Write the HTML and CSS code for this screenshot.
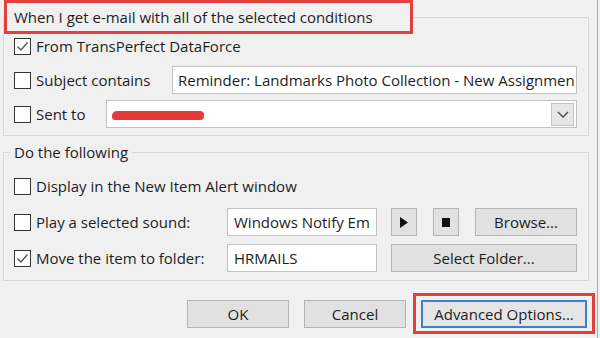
FILE: index.html
```html
<!DOCTYPE html>
<html lang="en">
<head>
    <meta charset="UTF-8">
    <title>Create Rule</title>
    <link rel="stylesheet" href="styles.css">
</head>
<body>
    <div class="window">
        <fieldset class="group group-conditions">
            <legend class="group-title marked">When I get e-mail with all of the selected conditions</legend>
            <div class="row">
                <label class="check-label">
                    <span class="checkbox"><svg viewBox="0 0 15 15" width="15" height="15"><polyline points="2.5,7.5 6,11 12.5,3.5" fill="none" stroke="#555" stroke-width="1.4"/></svg></span>
                    From TransPerfect DataForce
                </label>
            </div>
            <div class="row">
                <label class="check-label label-subject"><span class="checkbox"></span>Subject contains</label>
                <div class="field grow">Reminder: Landmarks Photo Collection - New Assignmen</div>
            </div>
            <div class="row">
                <label class="check-label label-sent"><span class="checkbox"></span>Sent to</label>
                <div class="field combo grow">
                    <span class="redacted"></span>
                    <span class="drop-btn"><svg viewBox="0 0 12 7" width="12" height="7"><polyline points="1,1 6,6 11,1" fill="none" stroke="#555" stroke-width="1.5"/></svg></span>
                </div>
            </div>
        </fieldset>

        <fieldset class="group group-actions">
            <legend class="group-title">Do the following</legend>
            <div class="row">
                <label class="check-label"><span class="checkbox"></span>Display in the New Item Alert window</label>
            </div>
            <div class="row">
                <label class="check-label label-action"><span class="checkbox"></span>Play a selected sound:</label>
                <div class="field field-short">Windows Notify Em</div>
                <div class="btn-group">
                    <button class="btn btn-icon"><svg viewBox="0 0 8 11" width="8" height="11"><polygon points="0,0 8,5.5 0,11" fill="#111"/></svg></button>
                    <button class="btn btn-icon"><span class="stop"></span></button>
                    <button class="btn btn-browse">Browse...</button>
                </div>
            </div>
            <div class="row">
                <label class="check-label label-action">
                    <span class="checkbox"><svg viewBox="0 0 15 15" width="15" height="15"><polyline points="2.5,7.5 6,11 12.5,3.5" fill="none" stroke="#555" stroke-width="1.4"/></svg></span>
                    Move the item to folder:
                </label>
                <div class="field field-short">HRMAILS</div>
                <div class="btn-group">
                    <button class="btn btn-wide">Select Folder...</button>
                </div>
            </div>
        </fieldset>

        <div class="footer">
            <button class="btn btn-dialog">OK</button>
            <button class="btn btn-dialog btn-cancel">Cancel</button>
            <span class="marked-btn"><button class="btn btn-advanced">Advanced Options...</button></span>
        </div>
    </div>
</body>
</html>
```

FILE: styles.css
```css
body {
    margin: 0;
    padding: 0;
    background-color: #f0f0f0;
    font-family: "Open Sans", "Noto Sans", Arial, sans-serif;
    font-size: 15px;
    color: #1e1e1e;
}
.window {
    width: 597px;
    height: 338px;
    border-right: 1px solid #a8a8a8;
    overflow: hidden;
}
.group {
    box-sizing: border-box;
    width: 586px;
    margin: 0 0 0 3px;
    padding: 0 11px 7px 10px;
    border: 1px solid #d9d9d9;
    min-width: 0;
}
.group-title {
    line-height: 20px;
    padding: 0 4px;
    margin-left: -4px;
}
.group-title.marked {
    box-sizing: border-box;
    width: 409px;
    height: 34px;
    margin-left: -10px;
    margin-bottom: -6px;
    padding: 4px 7px;
    border: 3px solid #e2403c;
}
.group-conditions {
    padding-top: 4px;
}
.group-conditions .row + .row {
    margin-top: 6px;
}
.group-actions {
    margin-top: 6px;
    padding-top: 10px;
    padding-bottom: 8px;
}
.group-actions .row + .row {
    margin-top: 8px;
}
.row {
    display: flex;
    align-items: center;
    height: 28px;
}
.check-label {
    display: flex;
    align-items: center;
    flex-shrink: 0;
    white-space: nowrap;
}
.label-subject { width: 158px; }
.label-sent { width: 92px; }
.label-action { width: 213px; }
.checkbox {
    box-sizing: border-box;
    width: 17px;
    height: 17px;
    margin-right: 5px;
    border: 1px solid #333;
    background-color: #fff;
    display: flex;
    align-items: center;
    justify-content: center;
}
.field {
    box-sizing: border-box;
    height: 28px;
    padding: 0 5px;
    border: 1px solid #c2c2c2;
    background-color: #fff;
    line-height: 26px;
    white-space: nowrap;
    overflow: hidden;
}
.grow {
    flex: 1;
}
.field-short {
    width: 150px;
    padding-left: 6px;
}
.combo {
    display: flex;
    align-items: center;
    justify-content: space-between;
    padding-right: 2px;
}
.redacted {
    display: inline-block;
    width: 92px;
    height: 9px;
    margin-top: 2px;
    background-color: #e5393a;
    border-radius: 5px 4px 4px 3px;
}
.drop-btn {
    box-sizing: border-box;
    width: 23px;
    height: 23px;
    border: 1px solid #c4c4c4;
    background-color: #e6e6e6;
    display: flex;
    align-items: center;
    justify-content: center;
}
.btn-group {
    display: flex;
    gap: 16px;
    margin-left: 14px;
}
.btn {
    box-sizing: border-box;
    height: 28px;
    padding: 0;
    border: 1px solid #b4b4b4;
    background-color: #e1e1e1;
    font-family: inherit;
    font-size: 15px;
    color: #1e1e1e;
    display: flex;
    align-items: center;
    justify-content: center;
}
.btn-icon { width: 26px; }
.stop {
    width: 8px;
    height: 9px;
    background-color: #111;
}
.btn-browse { width: 102px; }
.btn-wide { width: 186px; }
.footer {
    display: flex;
    justify-content: flex-end;
    align-items: flex-start;
    margin-top: 12px;
    padding-right: 2px;
}
.btn-dialog {
    width: 102px;
    margin-top: 7px;
    margin-right: 15px;
}
.btn-cancel {
    margin-right: 7px;
}
.marked-btn {
    padding: 4px 5px 3px;
    border: 3px solid #e2403c;
}
.btn-advanced {
    width: 166px;
    border: 2px solid #3b7edb;
    background-color: #e5e5e5;
}
```
